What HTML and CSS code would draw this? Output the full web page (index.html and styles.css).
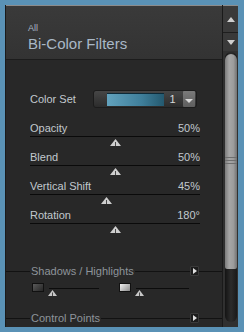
FILE: index.html
```html
<!DOCTYPE html>
<html>
<head>
<meta charset="utf-8">
<link rel="stylesheet" href="styles.css">
</head>
<body>
<div class="panel">
  <div class="main">
    <div class="header">
      <div class="crumb">All</div>
      <div class="title">Bi-Color Filters</div>
    </div>
    <div class="content">
      <div class="colorset">
        <span class="label">Color Set</span>
        <div class="combo">
          <span class="swatch"></span>
          <span class="num">1</span>
          <span class="drop"><svg width="8" height="5" viewBox="0 0 8 5"><polygon points="0,0 8,0 4,4" fill="#d8d8d8"/></svg></span>
        </div>
      </div>
      <div class="slider">
        <div class="srow"><span>Opacity</span><span>50%</span></div>
        <div class="track"></div>
        <div class="thumbrow"><svg class="thumb" style="margin-left:calc(50% - 5.5px)" width="11" height="7" viewBox="0 0 11 7"><polygon points="5.5,0 11,7 0,7" fill="#cfcfcf"/><rect x="5" y="3" width="1" height="4" fill="#4a4a4a"/></svg></div>
      </div>
      <div class="slider">
        <div class="srow"><span>Blend</span><span>50%</span></div>
        <div class="track"></div>
        <div class="thumbrow"><svg class="thumb" style="margin-left:calc(50% - 5.5px)" width="11" height="7" viewBox="0 0 11 7"><polygon points="5.5,0 11,7 0,7" fill="#cfcfcf"/><rect x="5" y="3" width="1" height="4" fill="#4a4a4a"/></svg></div>
      </div>
      <div class="slider">
        <div class="srow"><span>Vertical Shift</span><span>45%</span></div>
        <div class="track"></div>
        <div class="thumbrow"><svg class="thumb" style="margin-left:calc(45% - 5.5px)" width="11" height="7" viewBox="0 0 11 7"><polygon points="5.5,0 11,7 0,7" fill="#cfcfcf"/><rect x="5" y="3" width="1" height="4" fill="#4a4a4a"/></svg></div>
      </div>
      <div class="slider">
        <div class="srow"><span>Rotation</span><span>180°</span></div>
        <div class="track"></div>
        <div class="thumbrow"><svg class="thumb" style="margin-left:calc(50% - 5.5px)" width="11" height="7" viewBox="0 0 11 7"><polygon points="5.5,0 11,7 0,7" fill="#cfcfcf"/><rect x="5" y="3" width="1" height="4" fill="#4a4a4a"/></svg></div>
      </div>
    </div>
    <div class="section first">
      <span class="rule lead"></span>
      <span class="stitle">Shadows / Highlights</span>
      <span class="rule grow"></span>
      <span class="sbtn"><svg width="4" height="6" viewBox="0 0 4 6"><polygon points="0,0 4,3 0,6" fill="#e0e0e0"/></svg></span>
      <span class="rule tail"></span>
    </div>
    <div class="tones">
      <span class="tswatch dark"></span>
      <div class="mini s1">
        <div class="mline"></div>
        <svg class="mthumb" width="9" height="6" viewBox="0 0 9 6"><polygon points="4.5,0 9,6 0,6" fill="#c8c8c8"/><rect x="4" y="2.5" width="1" height="3.5" fill="#4a4a4a"/></svg>
      </div>
      <span class="tswatch light"></span>
      <div class="mini s2">
        <div class="mline"></div>
        <svg class="mthumb" width="9" height="6" viewBox="0 0 9 6"><polygon points="4.5,0 9,6 0,6" fill="#c8c8c8"/><rect x="4" y="2.5" width="1" height="3.5" fill="#4a4a4a"/></svg>
      </div>
    </div>
    <div class="section second">
      <span class="rule lead"></span>
      <span class="stitle">Control Points</span>
      <span class="rule grow"></span>
      <span class="sbtn"><svg width="4" height="6" viewBox="0 0 4 6"><polygon points="0,0 4,3 0,6" fill="#e0e0e0"/></svg></span>
      <span class="rule tail"></span>
    </div>
  </div>
  <div class="scrollbar">
    <div class="sb-up"><svg width="8" height="5" viewBox="0 0 8 5"><polygon points="0,5 8,5 4,0" fill="#cfcfcf"/></svg></div>
    <div class="sb-down"><svg width="8" height="5" viewBox="0 0 8 5"><polygon points="0,0 8,0 4,5" fill="#cfcfcf"/></svg></div>
    <div class="sb-track">
      <div class="sb-thumb"><span class="grip"></span></div>
    </div>
  </div>
</div>
</body>
</html>
```
FILE: styles.css
```css
html, body {
  margin: 0;
  padding: 0;
}
body {
  width: 244px;
  height: 332px;
  box-sizing: border-box;
  padding: 5px 6px 5px 5px;
  background: #5a92b6;
  font-family: "Liberation Sans", Arial, sans-serif;
  font-size: 11px;
  color: #c2c8ce;
  overflow: hidden;
}
.panel {
  display: flex;
  height: 322px;
  background: #262626;
}
.main {
  flex: 1;
  display: flex;
  flex-direction: column;
  border-left: 1px solid #1a1a1a;
  background: #282828;
}
.header {
  height: 55px;
  box-sizing: border-box;
  border-top: 1px solid #8c8c8c;
  border-bottom: 1px solid #1c1c1c;
  background: linear-gradient(#3a3a3a, #333333);
  padding: 17px 0 0 22px;
}
.crumb {
  font-size: 9px;
  line-height: 10px;
  color: #a9b7c5;
}
.title {
  font-size: 15px;
  line-height: 18px;
  color: #a9b8c7;
  margin-top: 2px;
}
.content {
  padding: 0 22px 0 24px;
}
.colorset {
  display: flex;
  align-items: center;
  height: 18px;
  margin-top: 30px;
}
.colorset .label {
  width: 63px;
}
.combo {
  width: 104px;
  height: 18px;
  box-sizing: border-box;
  display: flex;
  align-items: center;
  padding: 0 1px 0 13px;
  border-radius: 3px;
  background: linear-gradient(#464646, #2c2c2c);
  border: 1px solid #1c1c1c;
}
.swatch {
  width: 57px;
  height: 12px;
  border-top: 1px solid #0d2a38;
  background: linear-gradient(90deg, #62a2bd, #3f7f9b 60%, #24596f);
}
.num {
  flex: 1;
  text-align: center;
  color: #d8d8d8;
  font-size: 11px;
  padding-right: 2px;
}
.drop {
  width: 12px;
  height: 16px;
  display: flex;
  align-items: flex-end;
  justify-content: center;
  padding-bottom: 3px;
  box-sizing: border-box;
  background: linear-gradient(#7a7a7a, #5e5e5e);
  border-radius: 1px;
}
.slider {
  margin-top: 0;
}
.colorset + .slider {
  margin-top: 13px;
}
.srow {
  display: flex;
  justify-content: space-between;
  height: 15px;
  line-height: 14px;
}
.track {
  height: 1px;
  background: #0a0a0a;
}
.thumbrow {
  height: 13px;
  display: flex;
  align-items: flex-start;
}
.thumb {
  margin-top: 2px;
  display: block;
}
.section {
  display: flex;
  align-items: center;
  height: 10px;
}
.section.first {
  margin-top: 29px;
}
.section.second {
  margin-top: 16px;
}
.rule {
  height: 1px;
  background: #121212;
}
.rule.lead {
  width: 24px;
  margin-right: 1px;
}
.rule.grow {
  flex: 1;
  margin-left: 1px;
}
.rule.tail {
  width: 23px;
}
.stitle {
  color: #8e949a;
  line-height: 10px;
}
.sbtn {
  width: 9px;
  height: 10px;
  box-sizing: border-box;
  display: flex;
  align-items: center;
  justify-content: center;
  background: #1c1c1c;
  border: 1px solid #3a3a3a;
  border-radius: 1px;
}
.tones {
  display: flex;
  align-items: flex-start;
  margin-top: 7px;
  height: 14px;
  padding-left: 26px;
}
.tswatch {
  width: 12px;
  height: 9px;
  box-sizing: border-box;
  border: 1px solid #111;
}
.tswatch.dark {
  background: linear-gradient(135deg, #5a5a5a, #262626);
}
.tswatch.light {
  background: linear-gradient(135deg, #f0f0f0, #8a8a8a);
}
.mini {
  display: flex;
  flex-direction: column;
}
.mini.s1 {
  width: 50px;
  margin-left: 5px;
  margin-right: 20px;
}
.mini.s2 {
  width: 53px;
  margin-left: 5px;
}
.mline {
  height: 1px;
  margin-top: 5px;
  background: #0c0c0c;
}
.mthumb {
  display: block;
  margin-top: 1px;
  margin-left: -1px;
}
.scrollbar {
  width: 16px;
  display: flex;
  flex-direction: column;
  background: #303030;
  border-left: 1px solid #1a1a1a;
  box-sizing: border-box;
}
.sb-up {
  height: 28px;
  box-sizing: border-box;
  border-top: 1px solid #8c8c8c;
  border-bottom: 1px solid #1e1e1e;
  display: flex;
  align-items: center;
  justify-content: center;
  background: #3a3a3a;
}
.sb-down {
  height: 18px;
  display: flex;
  align-items: center;
  justify-content: center;
  background: #393939;
}
.sb-track {
  flex: 1;
  margin: 1px 1px 5px 2px;
  border-radius: 6px;
  background: linear-gradient(90deg, #141414, #2c2c2c 50%, #1a1a1a);
  display: flex;
  flex-direction: column;
}
.sb-thumb {
  height: 215px;
  margin-top: 2px;
  border-radius: 6px 6px 2px 2px;
  background: linear-gradient(90deg, #7c7c7c, #a6a6a6 35%, #9c9c9c 70%, #727272);
  display: flex;
  align-items: center;
}
.grip {
  display: block;
  width: 100%;
  height: 9px;
  background: repeating-linear-gradient(#6e6e6e 0 1px, transparent 1px 3px);
}
```
